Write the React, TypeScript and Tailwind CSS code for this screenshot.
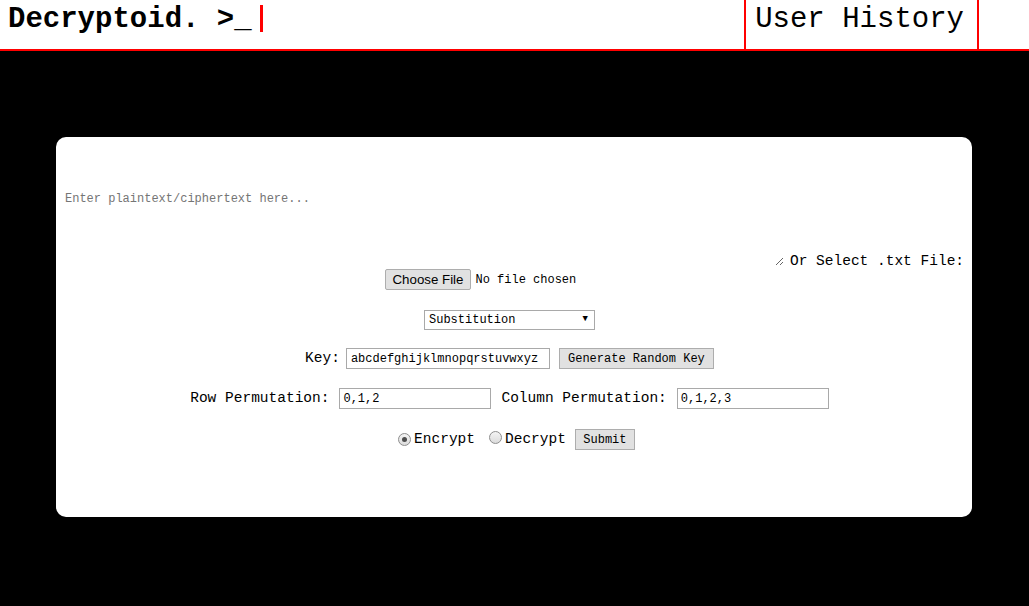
import React from 'react';

const mono = "font-['Liberation_Mono','DejaVu_Sans_Mono',monospace]";

const Radio = ({ checked }: { checked?: boolean }) => (
  <span className="inline-flex w-[13px] h-[13px] rounded-full border border-[#8e8e8e] bg-gradient-to-b from-[#f4f4f4] to-[#dcdcdc] items-center justify-center">
    {checked && <span className="w-[5px] h-[5px] rounded-full bg-[#4d4d4d]" />}
  </span>
);

const App = () => {
  return (
    <div className={`w-[1029px] h-[606px] bg-black overflow-hidden ${mono}`}>
      {/* Header */}
      <div className="h-[51px] bg-white border-b-2 border-[#ff0000] flex justify-between">
        <div className="flex items-start pl-[8px] pt-[3px]">
          <span className="text-[29px] leading-[33px] font-bold text-black">Decryptoid. &gt;_</span>
          <span className="ml-[8px] mt-[2px] w-[3px] h-[27px] bg-[#ff0000]" />
        </div>
        <div className="flex">
          <div className="border-x-2 border-[#ff0000] pl-[9px] pr-[13px] pt-[3px] text-[29px] leading-[33px] text-black">
            User History
          </div>
          <div className="w-[50px]" />
        </div>
      </div>

      {/* Card */}
      <div className="mt-[86px] ml-[56px] w-[916px] h-[380px] bg-white rounded-[10px] overflow-hidden">
        <div className="flex items-end">
          <textarea
            placeholder="Enter plaintext/ciphertext here..."
            className={`w-[728px] h-[129px] pt-[55px] px-[9px] text-[12px] leading-[14px] outline-none placeholder:text-[#757575] ${mono}`}
          />
          <span className="ml-[6px] mb-[-7px] text-[14.5px] text-black whitespace-nowrap">Or Select .txt File:</span>
        </div>

        <div className="flex flex-col items-center pr-[9px]">
          {/* file */}
          <div className="mt-[3px] w-[250px] h-[21px] flex items-center">
            <div className="h-[21px] px-[7px] flex items-center border border-[#adadad] bg-[#e1e1e1] rounded-[2px] font-['Liberation_Sans',Arial,sans-serif] text-[13.3px] text-black">
              Choose File
            </div>
            <span className="ml-[4px] text-[12px] text-black">No file chosen</span>
          </div>

          {/* cipher select */}
          <div className="mt-[20px] w-[171px] h-[20px] border border-[#a9a9a9] flex items-center justify-between pl-[4px] pr-[6px] text-[12px] text-black">
            <span>Substitution</span>
            <span className="text-[9px]">▼</span>
          </div>

          {/* key */}
          <div className="mt-[18px] h-[21px] flex items-center">
            <span className="text-[14.5px] text-black">Key:</span>
            <div className="ml-[6px] w-[204px] h-[21px] border border-[#a9a9a9] flex items-center pl-[4px] text-[12px] text-black">
              abcdefghijklmnopqrstuvwxyz
            </div>
            <div className="ml-[9px] w-[155px] h-[21px] border border-[#adadad] bg-[#e1e1e1] flex items-center justify-center text-[12px] text-black">
              Generate Random Key
            </div>
          </div>

          {/* permutations */}
          <div className="mt-[19px] h-[21px] flex items-center">
            <span className="text-[14.5px] text-black">Row Permutation:</span>
            <div className="ml-[10px] w-[152px] h-[21px] border border-[#a9a9a9] flex items-center pl-[3px] text-[12px] text-black">
              0,1,2
            </div>
            <span className="ml-[10px] text-[14.5px] text-black">Column Permutation:</span>
            <div className="ml-[10px] w-[152px] h-[21px] border border-[#a9a9a9] flex items-center pl-[3px] text-[12px] text-black">
              0,1,2,3
            </div>
          </div>

          {/* mode */}
          <div className="mt-[20px] ml-[14px] h-[21px] flex items-center">
            <Radio checked />
            <span className="ml-[3px] text-[14.5px] text-black">Encrypt</span>
            <span className="ml-[14px]"><Radio /></span>
            <span className="ml-[3px] text-[14.5px] text-black">Decrypt</span>
            <div className="ml-[9px] w-[60px] h-[21px] border border-[#adadad] bg-[#e1e1e1] flex items-center justify-center text-[12px] text-black">
              Submit
            </div>
          </div>
        </div>
      </div>
    </div>
  );
};

export default App;
